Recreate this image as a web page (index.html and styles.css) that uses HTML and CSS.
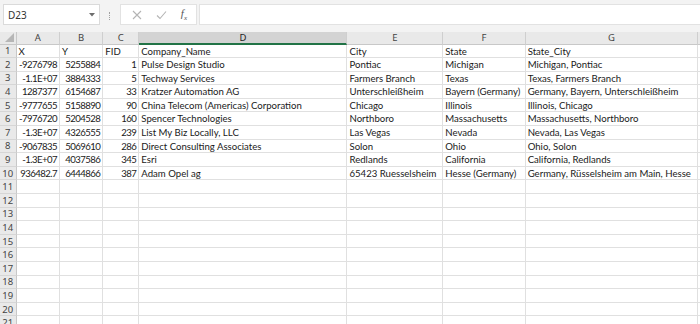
FILE: index.html
```html
<!doctype html>
<html lang="en">
<head>
	<meta charset="utf-8">
	<title>Book1 - Excel</title>
	<link rel="stylesheet" href="styles.css">
</head>
<body>
	<div class="formula-bar">
		<div class="name-box">
			<span>D23</span>
			<svg class="caret" width="6" height="4" viewBox="0 0 6 4"><path d="M0 0h6L3 3.5z" fill="#6d6d6d"/></svg>
		</div>
		<div class="grip"></div>
		<div class="fx-buttons">
			<svg width="10" height="10" viewBox="0 0 10 10"><path d="M1 1l8 8M9 1l-8 8" stroke="#b4b4b4" stroke-width="1.1" fill="none"/></svg>
			<svg width="11" height="10" viewBox="0 0 11 10"><path d="M1 5.5l3 3L10 1.5" stroke="#b4b4b4" stroke-width="1.1" fill="none"/></svg>
			<span class="fx">f<sub>x</sub></span>
		</div>
		<div class="formula-input"></div>
	</div>

	<div class="sheet">
		<div class="corner"><svg width="9" height="9" viewBox="0 0 9 9"><path d="M9 0v9H0z" fill="#b6b6b6"/></svg></div>
		<div class="col-head">A</div>
		<div class="col-head">B</div>
		<div class="col-head">C</div>
		<div class="col-head selected">D</div>
		<div class="col-head">E</div>
		<div class="col-head">F</div>
		<div class="col-head">G</div>
		<div class="col-head"></div>

		<div class="row-head">1</div><div class="cell">X</div><div class="cell">Y</div><div class="cell">FID</div><div class="cell">Company_Name</div><div class="cell">City</div><div class="cell">State</div><div class="cell">State_City</div><div class="cell"></div>
		<div class="row-head">2</div><div class="cell num">-9276798</div><div class="cell num">5255884</div><div class="cell num">1</div><div class="cell">Pulse Design Studio</div><div class="cell">Pontiac</div><div class="cell">Michigan</div><div class="cell">Michigan, Pontiac</div><div class="cell"></div>
		<div class="row-head">3</div><div class="cell num">-1.1E+07</div><div class="cell num">3884333</div><div class="cell num">5</div><div class="cell">Techway Services</div><div class="cell">Farmers Branch</div><div class="cell">Texas</div><div class="cell">Texas, Farmers Branch</div><div class="cell"></div>
		<div class="row-head">4</div><div class="cell num">1287377</div><div class="cell num">6154687</div><div class="cell num">33</div><div class="cell">Kratzer Automation AG</div><div class="cell">Unterschleißheim</div><div class="cell">Bayern (Germany)</div><div class="cell">Germany, Bayern, Unterschleißheim</div><div class="cell"></div>
		<div class="row-head">5</div><div class="cell num">-9777655</div><div class="cell num">5158890</div><div class="cell num">90</div><div class="cell">China Telecom (Americas) Corporation</div><div class="cell">Chicago</div><div class="cell">Illinois</div><div class="cell">Illinois, Chicago</div><div class="cell"></div>
		<div class="row-head">6</div><div class="cell num">-7976720</div><div class="cell num">5204528</div><div class="cell num">160</div><div class="cell">Spencer Technologies</div><div class="cell">Northboro</div><div class="cell">Massachusetts</div><div class="cell">Massachusetts, Northboro</div><div class="cell"></div>
		<div class="row-head">7</div><div class="cell num">-1.3E+07</div><div class="cell num">4326555</div><div class="cell num">239</div><div class="cell">List My Biz Locally, LLC</div><div class="cell">Las Vegas</div><div class="cell">Nevada</div><div class="cell">Nevada, Las Vegas</div><div class="cell"></div>
		<div class="row-head">8</div><div class="cell num">-9067835</div><div class="cell num">5069610</div><div class="cell num">286</div><div class="cell">Direct Consulting Associates</div><div class="cell">Solon</div><div class="cell">Ohio</div><div class="cell">Ohio, Solon</div><div class="cell"></div>
		<div class="row-head">9</div><div class="cell num">-1.3E+07</div><div class="cell num">4037586</div><div class="cell num">345</div><div class="cell">Esri</div><div class="cell">Redlands</div><div class="cell">California</div><div class="cell">California, Redlands</div><div class="cell"></div>
		<div class="row-head">10</div><div class="cell num">936482.7</div><div class="cell num">6444866</div><div class="cell num">387</div><div class="cell">Adam Opel ag</div><div class="cell">65423 Ruesselsheim</div><div class="cell">Hesse (Germany)</div><div class="cell">Germany, Rüsselsheim am Main, Hesse</div><div class="cell"></div>
		<div class="row-head">11</div><div class="cell"></div><div class="cell"></div><div class="cell"></div><div class="cell"></div><div class="cell"></div><div class="cell"></div><div class="cell"></div><div class="cell"></div>
		<div class="row-head">12</div><div class="cell"></div><div class="cell"></div><div class="cell"></div><div class="cell"></div><div class="cell"></div><div class="cell"></div><div class="cell"></div><div class="cell"></div>
		<div class="row-head">13</div><div class="cell"></div><div class="cell"></div><div class="cell"></div><div class="cell"></div><div class="cell"></div><div class="cell"></div><div class="cell"></div><div class="cell"></div>
		<div class="row-head">14</div><div class="cell"></div><div class="cell"></div><div class="cell"></div><div class="cell"></div><div class="cell"></div><div class="cell"></div><div class="cell"></div><div class="cell"></div>
		<div class="row-head">15</div><div class="cell"></div><div class="cell"></div><div class="cell"></div><div class="cell"></div><div class="cell"></div><div class="cell"></div><div class="cell"></div><div class="cell"></div>
		<div class="row-head">16</div><div class="cell"></div><div class="cell"></div><div class="cell"></div><div class="cell"></div><div class="cell"></div><div class="cell"></div><div class="cell"></div><div class="cell"></div>
		<div class="row-head">17</div><div class="cell"></div><div class="cell"></div><div class="cell"></div><div class="cell"></div><div class="cell"></div><div class="cell"></div><div class="cell"></div><div class="cell"></div>
		<div class="row-head">18</div><div class="cell"></div><div class="cell"></div><div class="cell"></div><div class="cell"></div><div class="cell"></div><div class="cell"></div><div class="cell"></div><div class="cell"></div>
		<div class="row-head">19</div><div class="cell"></div><div class="cell"></div><div class="cell"></div><div class="cell"></div><div class="cell"></div><div class="cell"></div><div class="cell"></div><div class="cell"></div>
		<div class="row-head">20</div><div class="cell"></div><div class="cell"></div><div class="cell"></div><div class="cell"></div><div class="cell"></div><div class="cell"></div><div class="cell"></div><div class="cell"></div>
		<div class="row-head">21</div><div class="cell"></div><div class="cell"></div><div class="cell"></div><div class="cell"></div><div class="cell"></div><div class="cell"></div><div class="cell"></div><div class="cell"></div>
	</div>
</body>
</html>
```

FILE: styles.css
```css
html, body {
	margin: 0;
	padding: 0;
	overflow: hidden;
	background: #fff;
}

body {
	width: 700px;
	height: 324px;
	font-family: Lato, "Liberation Sans", sans-serif;
}

/* formula bar */
.formula-bar {
	display: flex;
	align-items: flex-start;
	height: 32px;
	box-sizing: border-box;
	padding: 4px 0 0 3px;
	background: #f3f3f3;
}
.name-box {
	display: flex;
	align-items: center;
	justify-content: space-between;
	box-sizing: border-box;
	width: 97px;
	height: 21px;
	padding: 0 4px 0 4px;
	background: #fff;
	border: 1px solid #dadada;
	font-family: "Noto Sans", sans-serif;
	font-size: 10px;
	color: #333;
}
.grip {
	width: 1px;
	height: 8px;
	margin: 8px 9px 0 9px;
	border-left: 1px dotted #a0a0a0;
}
.fx-buttons {
	display: flex;
	align-items: center;
	justify-content: space-around;
	box-sizing: border-box;
	width: 77px;
	height: 21px;
	padding: 0 2px 0 4px;
	background: #fff;
	border: 1px solid #e2e2e2;
}
.fx {
	font-family: "Liberation Serif", serif;
	font-style: italic;
	font-size: 11px;
	color: #555;
}
.fx sub {
	font-size: 7px;
}
.formula-input {
	flex: 1;
	height: 21px;
	margin-left: 2px;
	box-sizing: border-box;
	background: #fff;
	border: 1px solid #e2e2e2;
	border-right: none;
}

/* sheet grid */
.sheet {
	display: grid;
	grid-template-columns: 16.5px 43.5px 43.3px 36px 208.2px 95.8px 82.4px 172.8px 1fr;
	grid-template-rows: 12.5px;
	grid-auto-rows: 13.6px;
}
.sheet > div {
	box-sizing: border-box;
	overflow: hidden;
	white-space: nowrap;
}
.corner {
	display: flex;
	align-items: flex-end;
	justify-content: flex-end;
	padding: 0 2px 2px 0;
	background: #e9e9e9;
	border-right: 1px solid #c8c8c8;
	border-bottom: 1px solid #c8c8c8;
}
.col-head {
	display: flex;
	align-items: center;
	justify-content: center;
	background: #e9e9e9;
	border-right: 1px solid #cfcfcf;
	border-bottom: 1px solid #c8c8c8;
	font-family: "Noto Sans", sans-serif;
	font-size: 9.5px;
	color: #444;
}
.col-head.selected {
	background: #d3d3d3;
	border-bottom: 2px solid #217346;
	color: #222;
}
.row-head {
	display: flex;
	align-items: center;
	justify-content: center;
	background: #e9e9e9;
	border-right: 1px solid #c8c8c8;
	border-bottom: 1px solid #d6d6d6;
	font-family: "Noto Sans", sans-serif;
	font-size: 9.5px;
	color: #444;
}
.cell {
	padding: 0 2px;
	border-right: 1px solid #e0e0e0;
	border-bottom: 1px solid #e0e0e0;
	font-size: 9.6px;
	line-height: 13px;
	color: #1a1a1a;
}
.cell.num {
	padding-right: 2px;
	text-align: right;
	letter-spacing: -0.55px;
}
```
